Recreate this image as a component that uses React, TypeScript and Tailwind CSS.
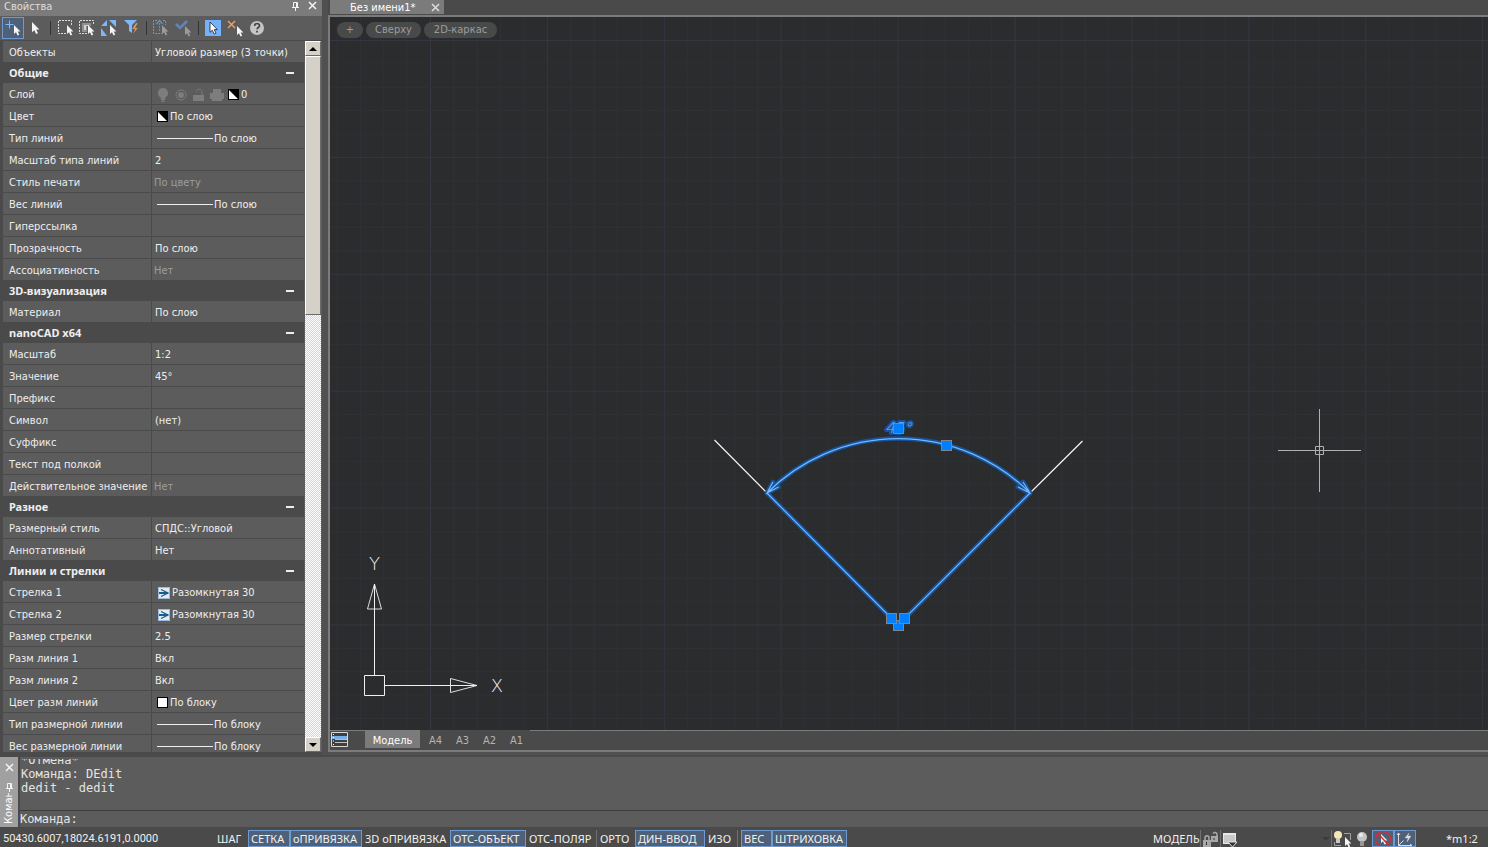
import React from "react";

type Kind = "text" | "layer" | "swatch" | "line" | "arrow" | "white";
type Row = { label: string; value?: string; kind?: Kind; dim?: boolean };
type Group = { title: string; rows: Row[] };

const groups: Group[] = [
  {
    title: "Общие",
    rows: [
      { label: "Слой", value: "0", kind: "layer" },
      { label: "Цвет", value: "По слою", kind: "swatch" },
      { label: "Тип линий", value: "По слою", kind: "line" },
      { label: "Масштаб типа линий", value: "2" },
      { label: "Стиль печати", value: "По цвету", dim: true },
      { label: "Вес линий", value: "По слою", kind: "line" },
      { label: "Гиперссылка" },
      { label: "Прозрачность", value: "По слою" },
      { label: "Ассоциативность", value: "Нет", dim: true },
    ],
  },
  { title: "3D-визуализация", rows: [{ label: "Материал", value: "По слою" }] },
  {
    title: "nanoCAD x64",
    rows: [
      { label: "Масштаб", value: "1:2" },
      { label: "Значение", value: "45°" },
      { label: "Префикс" },
      { label: "Символ", value: "(нет)" },
      { label: "Суффикс" },
      { label: "Текст под полкой" },
      { label: "Действительное значение", value: "Нет", dim: true },
    ],
  },
  {
    title: "Разное",
    rows: [
      { label: "Размерный стиль", value: "СПДС::Угловой" },
      { label: "Аннотативный", value: "Нет" },
    ],
  },
  {
    title: "Линии и стрелки",
    rows: [
      { label: "Стрелка 1", value: "Разомкнутая 30", kind: "arrow" },
      { label: "Стрелка 2", value: "Разомкнутая 30", kind: "arrow" },
      { label: "Размер стрелки", value: "2.5" },
      { label: "Разм линия 1", value: "Вкл" },
      { label: "Разм линия 2", value: "Вкл" },
      { label: "Цвет разм линий", value: "По блоку", kind: "white" },
      { label: "Тип размерной линии", value: "По блоку", kind: "line" },
      { label: "Вес размерной линии", value: "По блоку", kind: "line" },
    ],
  },
];

const CURSOR = "M0 0V9L2 7.2L3.6 10.5L5.2 9.7L3.7 6.6H6.4Z";

function Cursor({ x, y, fill = "#f4f4f4" }: { x: number; y: number; fill?: string }) {
  return <path d={CURSOR} transform={`translate(${x} ${y})`} fill={fill} />;
}

function Tool({ label, on, children }: { label: string; on?: boolean; children: React.ReactNode }) {
  return (
    <button
      type="button"
      aria-label={label}
      aria-pressed={!!on}
      className={
        on
          ? "h-[22px] w-[22px] shrink-0 bg-[#4e6178] outline outline-1 -outline-offset-1 outline-[#6d9ad0]"
          : "h-[22px] w-[22px] shrink-0"
      }
    >
      <svg width="22" height="22" viewBox="0 0 22 22" fill="none">
        {children}
      </svg>
    </button>
  );
}

function Sep() {
  return (
    <span className="flex w-2 shrink-0 justify-center">
      <span className="h-[14px] w-px bg-[#333333]" />
    </span>
  );
}

function Toolbar() {
  return (
    <div role="toolbar" aria-label="Выбор" className="flex h-6 shrink-0 items-center bg-[#5c5c5c] pl-[2px]">
      <Tool label="Добавить к выбору" on>
        <path d="M7.5 3.5V11.5M3.5 7.5H11.5" stroke="#7db8ff" />
        <Cursor x={12} y={8} />
      </Tool>
      <Tool label="Выбрать">
        <path d={CURSOR} transform="translate(8 5) scale(1.15)" fill="#f4f4f4" />
      </Tool>
      <Sep />
      <Tool label="Выбор рамкой">
        <path d="M12 16.500H4.500V3.500H17.500V8" stroke="#dcdcdc" strokeDasharray="2 1" />
        <Cursor x={13} y={8} />
      </Tool>
      <Tool label="Секущая рамка">
        <path d="M11 16.500H3.500V3.500H17.500V8" stroke="#dcdcdc" strokeDasharray="2 1" />
        <path d="M6 6h9v3h-4v6H6z" fill="#8f8f8f" />
        <path d="M8 8h5v1h-3v4H8z" fill="#d0d0d0" />
        <Cursor x={12} y={8} />
      </Tool>
      <Tool label="Инвертировать выбор">
        <path d="M9 3v6L3 9zM11 3h7v7zM3 11l6 8H3z" fill="#7db8ff" />
        <Cursor x={12} y={8} />
      </Tool>
      <Tool label="Быстрый выбор">
        <path d="M4 3h13l-5 5v8l-3-2V8z" fill="#7db8ff" />
        <path d="M16 6l-4 6h3l-2 5 5-6h-3l3-5z" fill="#f0a868" stroke="#5c5c5c" strokeWidth=".5" />
      </Tool>
      <Sep />
      <Tool label="Выбрать предыдущие">
        <path d="M7 3.500H3.500V16.500H12M13 3.500H15.500V8" stroke="#929292" strokeDasharray="2 1" />
        <path d="M9.500 14V4" stroke="#5f8fc8" strokeDasharray="2 1" />
        <path d="M6.500 7L9.500 3.500L12.500 7" stroke="#5f8fc8" strokeWidth="1.500" />
        <Cursor x={12} y={8} fill="#9b9b9b" />
      </Tool>
      <Tool label="Подтвердить выбор">
        <path d="M4 7l4 4 7-7" stroke="#5f86b4" strokeWidth="2.500" />
        <Cursor x={13} y={9} fill="#9b9b9b" />
      </Tool>
      <Sep />
      <Tool label="Режим выбора">
        <rect x="3" y="3" width="16" height="16" fill="#73b2ff" />
        <path d={CURSOR} transform="translate(8 5) scale(1.15)" fill="#ffffff" stroke="#333333" strokeWidth=".8" />
      </Tool>
      <Tool label="Снять выбор">
        <path d="M4 4l7 7M11 4l-7 7" stroke="#f5a55c" strokeWidth="1.300" />
        <Cursor x={13} y={9} />
      </Tool>
      <Tool label="Справка">
        <circle cx="11" cy="11" r="7" fill="#c4c4c4" />
        <path d="M8.600 9c0-3.300 5-3.200 4.900-.3 0 1.800-2.400 1.700-2.400 3.600M11 13.800v1.800" stroke="#444444" strokeWidth="1.700" />
      </Tool>
    </div>
  );
}

function Pin() {
  return (
    <svg width="9" height="10" viewBox="0 0 9 10" fill="none" stroke="#f4f4f4">
      <path d="M2.500 6V1.500H6.500V6M5.500 1.500V6M1 6.500H8M4.500 6.500V10" />
    </svg>
  );
}

function Cross() {
  return (
    <svg width="9" height="9" viewBox="0 0 9 9" fill="none" stroke="#f4f4f4" strokeWidth="1.500">
      <path d="M1 1l7 7M8 1L1 8" />
    </svg>
  );
}

function Swatch() {
  return (
    <svg width="11" height="11" viewBox="0 0 11 11" className="shrink-0">
      <path d="M0 0h11v11H0z" fill="#000000" />
      <path d="M1 1v9h9z" fill="#ffffff" />
    </svg>
  );
}

function LayerIcons() {
  return (
    <svg width="72" height="16" viewBox="-2 0 72 16" fill="#7d7d7d" className="shrink-0">
      <path d="M7 1a5 5 0 0 1 3 9l-1 1v2H5v-2l-1-1a5 5 0 0 1 3-9zM5.500 13.500h3V15h-3z" />
      <circle cx="25" cy="8" r="5" fill="none" stroke="#7d7d7d" />
      <circle cx="25" cy="8" r="3" />
      <path d="M37 8h11v6H37z" />
      <path d="M40.500 4.500c0-3 5.500-3 5.500 0V8" fill="none" stroke="#7d7d7d" />
      <path d="M57 2h8v4h3v6h-2v2H56v-2h-2V6h3z" />
    </svg>
  );
}

function Value({ row }: { row: Row }) {
  if (row.kind === "layer")
    return (
      <span className="flex items-center gap-[2px]">
        <LayerIcons />
        <Swatch />
        {row.value}
      </span>
    );
  if (row.kind === "swatch")
    return (
      <span className="flex items-center gap-[2px] pl-[3px]">
        <Swatch />
        {row.value}
      </span>
    );
  if (row.kind === "white")
    return (
      <span className="flex items-center gap-[2px] pl-[3px]">
        <span className="h-[11px] w-[11px] border border-black bg-white" />
        {row.value}
      </span>
    );
  if (row.kind === "line")
    return (
      <span className="flex items-center gap-px pl-[3px]">
        <span className="h-px w-14 bg-[#eeeeee]" />
        {row.value}
      </span>
    );
  if (row.kind === "arrow")
    return (
      <span className="flex items-center gap-[2px] pl-1">
        <svg width="12" height="12" viewBox="0 0 12 12" fill="none">
          <path d="M0 0h12v12H0z" fill="#e4ebf2" />
          <path d="M.5.5h11v11H.5z" stroke="#9dbbd8" />
          <path d="M1 6h9" stroke="#155f91" strokeWidth="2" />
          <path d="M3 2.500l7 3.500-7 3.500" stroke="#155f91" strokeWidth="1.300" />
        </svg>
        {row.value}
      </span>
    );
  return <span className={row.dim ? "text-[#9d9d9d]" : "pl-px"}>{row.value}</span>;
}

function PropRow({ row }: { row: Row }) {
  return (
    <tr className="h-[22px]">
      <th scope="row" className="w-[149px] border-r border-b border-[#4a4a4a] bg-[#5c5c5c] p-0 pt-[2px] pl-[6px] text-left font-normal whitespace-nowrap">
        {row.label}
      </th>
      <td className="border-b border-[#4a4a4a] bg-[#5c5c5c] p-0 pt-[2px] pl-[2px] whitespace-nowrap">
        <Value row={row} />
      </td>
    </tr>
  );
}

function ScrollButton({ up }: { up?: boolean }) {
  return (
    <button
      type="button"
      aria-label={up ? "Прокрутить вверх" : "Прокрутить вниз"}
      className="flex h-[15px] shrink-0 items-center justify-center border border-t-white border-r-[#6a6a6a] border-b-[#6a6a6a] border-l-white bg-[#d5d1c9]"
    >
      <svg width="8" height="4" viewBox="0 0 8 4">
        <path d={up ? "M0 4L4 0L8 4z" : "M0 0L4 4L8 0z"} fill="#000000" />
      </svg>
    </button>
  );
}

function Properties() {
  return (
    <aside className="flex w-[322px] shrink-0 flex-col bg-[#5c5c5c]">
      <header className="flex h-4 shrink-0 items-center bg-[#7b7b7b] pr-[5px] pl-1">
        <h2 className="flex-1 pb-[2px] leading-3 text-[#dedede]">Свойства</h2>
        <button type="button" aria-label="Закрепить" className="mr-2 pb-[5px]">
          <Pin />
        </button>
        <button type="button" aria-label="Закрыть панель" className="pb-[5px]">
          <Cross />
        </button>
      </header>
      <Toolbar />
      <div className="flex min-h-0 flex-1 border-t border-[#4a4a4a]">
        <div className="min-w-0 flex-1 overflow-hidden border-l-3 border-[#4a4a4a]">
          <table className="w-full table-fixed border-separate border-spacing-0">
            <colgroup>
              <col className="w-[149px]" />
              <col />
            </colgroup>
            <tbody>
              <PropRow row={{ label: "Объекты", value: "Угловой размер (3 точки)" }} />
            </tbody>
            {groups.map((g) => (
              <tbody key={g.title}>
                <tr className="h-5 bg-[#4a4a4a]">
                  <th colSpan={2} scope="rowgroup" className="p-0 text-left">
                    <button type="button" aria-expanded="true" className="flex w-full items-center justify-between pr-[10px] pl-[6px] font-['Noto_Sans',sans-serif] font-bold">
                      {g.title}
                      <span className="h-[2px] w-2 bg-[#eeeeee]" />
                    </button>
                  </th>
                </tr>
                {g.rows.map((r) => (
                  <PropRow key={r.label} row={r} />
                ))}
              </tbody>
            ))}
          </table>
        </div>
        <div className="mr-px ml-px flex w-4 shrink-0 flex-col bg-[repeating-conic-gradient(#d5d1c9_0_25%,#ffffff_0_50%)] bg-[length:2px_2px]">
          <ScrollButton up />
          <div className="h-[259px] shrink-0 border border-t-white border-r-[#6a6a6a] border-b-[#6a6a6a] border-l-white bg-[#d5d1c9]" />
          <div className="flex-1" />
          <ScrollButton />
        </div>
      </div>
    </aside>
  );
}

const STEP = 23.38;
const gridX = Array.from({ length: 120 }, (_, i) => ({ p: 100.5 + (i - 4) * STEP, major: (i - 4) % 5 === 0 }));
const gridY = Array.from({ length: 80 }, (_, i) => ({ p: 23.5 + i * STEP, major: i % 5 === 0 }));

function Grip({ x, y }: { x: number; y: number }) {
  return <rect x={x - 5} y={y - 5} width="10" height="10" fill="#0080ff" stroke="#7f858c" />;
}

function Drawing() {
  const dim = "M437 476A186 186 0 0 1 700 476M437 476L568 608L700 476M443 465L437 476L448.500 470M693 465L700 476L688 470";
  return (
    <svg className="absolute inset-0 h-full w-full" role="img" aria-label="Чертёж" fill="none">
      {gridX.map((g) => (
        <path key={`x${g.p}`} d={`M${g.p} 0V2000`} stroke={g.major ? "#363644" : "#303138"} />
      ))}
      {gridY.map((g) => (
        <path key={`y${g.p}`} d={`M0 ${g.p}H3000`} stroke={g.major ? "#363640" : "#303136"} />
      ))}
      <path d="M384.500 423L437 476M752.500 424L700 476" stroke="#f4f4f4" strokeWidth="1.200" />
      <path d={dim} stroke="#14549e" strokeWidth="4.600" strokeLinejoin="round" strokeLinecap="round" />
      <path d={dim} stroke="#78b6f8" strokeWidth="1.200" />
      <text x="555" y="416" fontSize="15" fontStyle="italic" fontWeight="200" fontFamily="DejaVu Sans Light, DejaVu Sans, sans-serif" fill="#6cb4ff" stroke="#14549e" strokeWidth="4" strokeLinejoin="round" paintOrder="stroke">
        45°
      </text>
      <Grip x={568.5} y={411.5} />
      <Grip x={616.5} y={428.5} />
      <Grip x={568.5} y={608.5} />
      <Grip x={561.5} y={601.5} />
      <Grip x={574.5} y={601.5} />
      <g stroke="#f0f0f0">
        <path d="M34.500 658.500h20v20h-20zM44.500 658.500V567M55 668.500H147" />
        <path d="M44.500 567L37.500 592H51.500zM147 668.500L120.500 661.500V675.500z" strokeWidth=".9" />
      </g>
      <g fontFamily="DejaVu Sans Light, DejaVu Sans, sans-serif" fontSize="18" fontWeight="200" fill="#f0f0f0" textAnchor="middle">
        <text x="44.5" y="553">Y</text>
        <text x="167" y="675">X</text>
      </g>
      <path d="M989.500 392V475M948 433.500H1031M985.500 429.500h8v8h-8z" stroke="#b0b0b0" />
    </svg>
  );
}

function Workspace() {
  return (
    <main className="flex min-w-0 flex-1 flex-col">
      <div className="flex h-[15px] shrink-0 items-start bg-[#4a4a4a] pl-[2px]">
        <div className="flex h-[14px] w-[114px] items-center bg-[#7b7b7b] pr-1 pl-5">
          <a href="#document" className="flex-1 pt-[2px] leading-3 whitespace-nowrap text-white">
            Без имени1*
          </a>
          <button type="button" aria-label="Закрыть документ">
            <svg width="9" height="9" viewBox="0 0 9 9" fill="none" stroke="#dddddd" strokeWidth="1.500">
              <path d="M1 1l7 7M8 1L1 8" />
            </svg>
          </button>
        </div>
      </div>
      <div className="flex min-h-0 flex-1 flex-col border-t-2 border-b-2 border-l-2 border-[#7b7b7b] bg-[#4a4a4a]">
        <div className="relative min-h-0 flex-1 overflow-hidden bg-[#2b2c2e]">
          <Drawing />
          <div className="relative flex gap-[3px] pt-[5px] pl-[7px] leading-4 text-[#9c9c9c]">
            <button type="button" className="h-4 w-[26px] rounded-full bg-[#484a49]">+</button>
            <button type="button" className="h-4 w-[55px] rounded-full bg-[#484a49]">Сверху</button>
            <button type="button" className="h-4 w-[73px] rounded-full bg-[#484a49]">2D-каркас</button>
          </div>
        </div>
        <nav aria-label="Листы" className="flex h-5 shrink-0 items-start text-[#b4b4b4]">
          <div className="h-5 w-[35px] border-t border-[#7b7b7b]">
            <button type="button" aria-label="Список листов" className="pt-px pl-px">
              <svg width="17" height="15" viewBox="0 0 17 15">
                <path d="M.5.500h16v14H.5z" fill="#3f3f3f" stroke="#d8d8d8" />
                <path d="M1 4h15v3H1z" fill="#78aeea" />
                <path d="M4 10.500h12M4 7.500h12" stroke="#c0c0c0" />
                <path d="M2 2.500h1M2 5.500h1M2 9h1M2 12.500h1" stroke="#ffffff" />
              </svg>
            </button>
          </div>
          <button type="button" className="h-[18px] w-[55px] bg-[#7b7b7b] pt-[3px] text-white">Модель</button>
          <div className="flex pl-[2px]">
            {["A4", "A3", "A2", "A1"].map((s) => (
              <button key={s} type="button" className="h-[18px] w-[27px] pt-[3px]">
                {s}
              </button>
            ))}
          </div>
          <div className="h-5 flex-1 border-t border-[#7b7b7b]" />
        </nav>
      </div>
      <div className="h-[3px] shrink-0" />
    </main>
  );
}

function CommandPanel() {
  return (
    <section className="flex h-[72px] shrink-0 border-t-2 border-[#4a4a4a] bg-[#5c5c5c]">
      <div className="flex w-[18px] shrink-0 flex-col items-center gap-[10px] overflow-hidden bg-[#a0a0a0] pt-[6px]">
        <button type="button" aria-label="Закрыть командную строку">
          <Cross />
        </button>
        <button type="button" aria-label="Закрепить командную строку">
          <Pin />
        </button>
        <span className="-mt-[9px] flex min-h-0 flex-1 rotate-180 overflow-hidden pt-[3px] leading-4 text-white [writing-mode:vertical-rl]">
          Коман
        </span>
      </div>
      <div className="flex min-w-0 flex-1 flex-col border-l-2 border-[#4a4a4a] font-['DejaVu_Sans_Mono',monospace] text-xs text-[#e4e4e4]">
        <div className="flex h-[54px] flex-col justify-end overflow-hidden border-b border-[#3c3c3c] pb-[15px] pl-px leading-[14px]">
          <p className="h-2 overflow-hidden">
            <span className="-mt-[6px] block">*Отмена*</span>
          </p>
          <p>Команда: DEdit</p>
          <p>dedit - dedit</p>
        </div>
        <label className="flex flex-1 items-center">
          Команда:
          <input type="text" className="ml-2 h-full min-w-0 flex-1 bg-transparent outline-none" />
        </label>
      </div>
    </section>
  );
}

const modes = [
  { t: "ШАГ", c: "w-[34px]", on: false },
  { t: "СЕТКА", c: "w-[42px]", on: true },
  { t: "оПРИВЯЗКА", c: "w-[72px]", on: true },
  { t: "3D оПРИВЯЗКА", c: "w-[88px]", on: false },
  { t: "ОТС-ОБЪЕКТ", c: "w-[76px]", on: true },
  { t: "ОТС-ПОЛЯР", c: "w-[71px] border-r border-r-[#707070]", on: false },
  { t: "ОРТО", c: "w-[38px]", on: false },
  { t: "ДИН-ВВОД", c: "w-[70px]", on: true },
  { t: "ИЗО", c: "w-[33px] border-r border-r-[#707070]", on: false },
  { t: "ВЕС", c: "ml-[3px] w-[31px]", on: true },
  { t: "ШТРИХОВКА", c: "w-[75px]", on: true },
];

function StatusBar() {
  return (
    <footer className="flex h-5 shrink-0 items-end bg-[#4a4a4a] font-['Noto_Sans',sans-serif] text-[#f0f0f0]">
      <output className="w-[214px] shrink-0 pl-[3px] font-['Roboto',sans-serif] leading-4">50430.6007,18024.6191,0.0000</output>
      <div className="flex h-[17px] shrink-0">
        {modes.map((m) => (
          <button
            key={m.t}
            type="button"
            aria-pressed={m.on}
            className={`${m.c} shrink-0 pt-px pl-[3px] text-left leading-4 whitespace-nowrap ${
              m.on ? "bg-[#4e6178] outline outline-1 -outline-offset-1 outline-[#6d9ad0]" : ""
            }`}
          >
            {m.t}
          </button>
        ))}
      </div>
      <div className="flex-1" />
      <div className="flex h-[17px] shrink-0">
        <button type="button" className="w-12 border-r border-[#707070] pt-px text-left leading-4">МОДЕЛЬ</button>
        <button type="button" aria-label="Блокировка" className="w-5 border-r border-[#707070]">
          <svg width="19" height="17" viewBox="0 0 19 17" fill="#a8a8a8">
            <path d="M2 10h8v7H2zM10 6h7v6h-7z" />
            <path d="M4 10V8c0-3 4-3 4 0v2M12 3.500c1-2 4-1 4 1V6" fill="none" stroke="#a8a8a8" strokeWidth="1.500" />
            <path d="M5.500 12v3M13 8v2" stroke="#333333" />
          </svg>
        </button>
        <button type="button" aria-label="Экран" className="w-[18px]">
          <svg width="18" height="17" viewBox="0 0 18 17">
            <path d="M2 3h13v11H2z" fill="#e8e8e8" />
            <path d="M3 5h11v8H3z" fill="#c9c9c9" />
            <path d="M7 12h9l-4.500 5z" fill="#333333" stroke="#dddddd" />
          </svg>
        </button>
      </div>
      <div className="flex h-[17px] w-[92px] shrink-0 items-center justify-end pr-px">
        <svg width="8" height="4" viewBox="0 0 8 4">
          <path d="M0 0h8L4 4z" fill="#3c3c3c" />
        </svg>
      </div>
      <div className="flex h-[17px] shrink-0 border-l border-[#707070]">
        <button type="button" aria-label="Подсветка выбора" className="w-5">
          <svg width="20" height="17" viewBox="0 0 20 17" fill="none">
            <path d="M12 3.500h6.500V10M2.500 12v3.500H9" stroke="#a0a0a0" />
            <circle cx="6" cy="5" r="4" fill="#f2e8b8" />
            <path d="M4 9h4v4H4z" fill="#c8c8c8" />
            <Cursor x={13} y={7} />
          </svg>
        </button>
        <button type="button" aria-label="Изоляция объектов" className="w-5">
          <svg width="20" height="17" viewBox="0 0 20 17">
            <circle cx="10" cy="7" r="5" fill="#c4c4c4" />
            <circle cx="9" cy="5" r="2" fill="#ececec" />
            <path d="M8 11h4v5H8z" fill="#969696" />
          </svg>
        </button>
        <button type="button" aria-label="Запрет выбора" aria-pressed="true" className="w-[22px] bg-[#4e6178] outline outline-1 -outline-offset-1 outline-[#6d9ad0]">
          <svg width="22" height="17" viewBox="0 0 22 17" fill="none">
            <Cursor x={9} y={4} />
            <circle cx="11" cy="9" r="7.500" stroke="#d03038" strokeWidth="1.500" />
            <path d="M6 3.500l10 11" stroke="#d03038" strokeWidth="1.500" />
          </svg>
        </button>
        <button type="button" aria-label="Динамическая ПСК" aria-pressed="true" className="w-[22px] bg-[#4e6178] outline outline-1 -outline-offset-1 outline-[#6d9ad0]">
          <svg width="22" height="17" viewBox="0 0 22 17" fill="none" stroke="#dddddd">
            <path d="M4.500 15.500V3M3 5l1.500-2L6 5M4.500 15.500H18M16 14l2 1.500-2 1.500M4.500 15.500l5-5" />
            <path d="M15 3l-4 5h3l-1 4 4-6h-3z" fill="#dddddd" strokeWidth=".3" />
          </svg>
        </button>
      </div>
      <button type="button" className="mr-3 ml-[30px] w-[30px] shrink-0 text-left leading-4 whitespace-nowrap">*m1:2</button>
    </footer>
  );
}

export default function App() {
  return (
    <div className="flex h-screen flex-col overflow-hidden bg-[#505050] font-['DejaVu_Sans_Condensed','DejaVu_Sans',sans-serif] text-[11px] leading-[14px] text-[#eeeeee]">
      <div className="flex min-h-0 flex-1 gap-[6px]">
        <div className="flex min-h-0 border-b-3 border-[#4a4a4a]">
          <Properties />
        </div>
        <Workspace />
      </div>
      <CommandPanel />
      <StatusBar />
    </div>
  );
}
